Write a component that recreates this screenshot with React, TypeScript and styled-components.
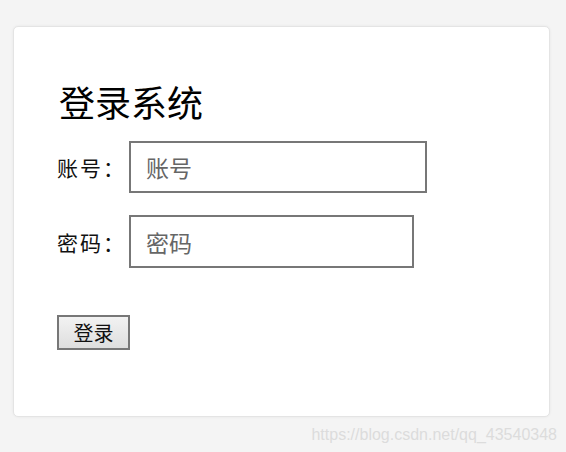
import React from "react";
import styled, { createGlobalStyle } from "styled-components";

const Global = createGlobalStyle`
  html, body { margin: 0; padding: 0; background: #f4f4f4; }
  body { width: 566px; height: 452px; overflow: hidden; font-family: "Noto Sans CJK SC", sans-serif; }
`;

const Page = styled.div`
  position: relative;
  width: 566px;
  height: 452px;
  padding: 26px 0 0 13px;
  box-sizing: border-box;
`;

const Card = styled.div`
  width: 537px;
  height: 391px;
  box-sizing: border-box;
  background: #fff;
  border-radius: 5px;
  border: 1px solid #e4e4e4;
  box-shadow: 0 0 3px rgba(0, 0, 0, 0.06);
  padding: 48px 0 0 43px;
  display: flex;
  flex-direction: column;
`;

const Title = styled.h1`
  margin: 0 0 0 2px;
  font-family: "Noto Sans CJK SC", sans-serif;
  font-weight: 400;
  font-size: 36px;
  line-height: 52px;
  color: #000;
`;

const Row = styled.div<{ $mt: number }>`
  display: flex;
  align-items: center;
  margin-top: ${(p) => p.$mt}px;
`;

const Label = styled.label`
  width: 72px;
  font-family: "Noto Sans CJK SC", sans-serif;
  font-size: 21px;
  color: #111;
  letter-spacing: 2px;
`;

const Input = styled.input<{ $w: number; $h: number }>`
  width: ${(p) => p.$w}px;
  height: ${(p) => p.$h}px;
  box-sizing: border-box;
  border: 2px solid #777;
  padding: 0 0 0 15px;
  font-family: "Noto Sans CJK SC", sans-serif;
  font-size: 23px;
  outline: none;
  background: #fff;
  &::placeholder { color: #666; }
`;

const Button = styled.button`
  margin-top: 47px;
  width: 73px;
  height: 35px;
  box-sizing: border-box;
  border: 2px solid #777;
  background: linear-gradient(#f2f2f2, #dedede);
  font-family: "Noto Sans CJK SC", sans-serif;
  font-size: 20px;
  color: #111;
  padding: 0;
  line-height: 1;
`;

const Watermark = styled.div`
  position: absolute;
  right: 9px;
  bottom: 8px;
  font-family: "Liberation Sans", Arial, sans-serif;
  font-size: 16px;
  color: #dcdcdc;
`;

export default function App() {
  return (
    <>
      <Global />
      <Page>
        <Card>
          <Title>登录系统</Title>
          <Row $mt={14}>
            <Label>账号：</Label>
            <Input $w={298} $h={52} placeholder="账号" />
          </Row>
          <Row $mt={22}>
            <Label>密码：</Label>
            <Input $w={285} $h={53} placeholder="密码" />
          </Row>
          <Button>登录</Button>
        </Card>
        <Watermark>https://blog.csdn.net/qq_43540348</Watermark>
      </Page>
    </>
  );
}
